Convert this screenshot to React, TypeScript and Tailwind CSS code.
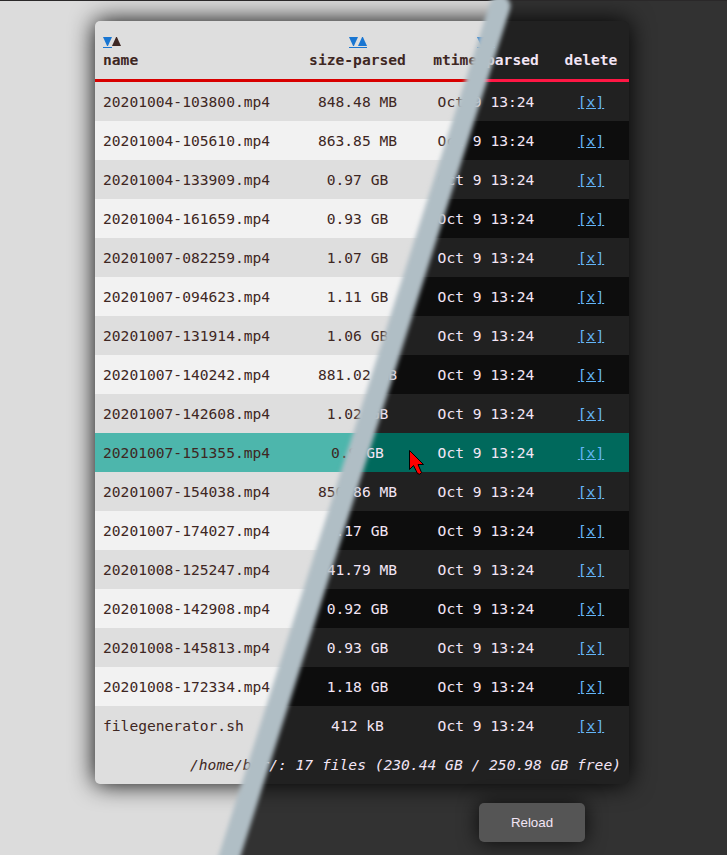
const FILES: [string, string][] = [
  ['20201004-103800.mp4', '848.48 MB'],
  ['20201004-105610.mp4', '863.85 MB'],
  ['20201004-133909.mp4', '0.97 GB'],
  ['20201004-161659.mp4', '0.93 GB'],
  ['20201007-082259.mp4', '1.07 GB'],
  ['20201007-094623.mp4', '1.11 GB'],
  ['20201007-131914.mp4', '1.06 GB'],
  ['20201007-140242.mp4', '881.02 MB'],
  ['20201007-142608.mp4', '1.02 GB'],
  ['20201007-151355.mp4', '0.9 GB'],
  ['20201007-154038.mp4', '850.86 MB'],
  ['20201007-174027.mp4', '1.17 GB'],
  ['20201008-125247.mp4', '841.79 MB'],
  ['20201008-142908.mp4', '0.92 GB'],
  ['20201008-145813.mp4', '0.93 GB'],
  ['20201008-172334.mp4', '1.18 GB'],
  ['filegenerator.sh', '412 kB'],
];

const HOVERED = 9;

const LIGHT = {
  page: 'bg-[#dcdcdc] text-[#3e2723]',
  card: 'bg-[#dedede] shadow-[0_0_25px_#000000]',
  header: 'border-[#d80000]',
  stripe: 'bg-[#f2f2f2]',
  hover: 'bg-[#4db6ac]',
  link: 'text-[#1976d2]',
  button: 'bg-[#eeeeee]',
};

const DARK = {
  page: 'bg-[#323232] text-[#f3e5f5]',
  card: 'bg-[#212121] shadow-[0_0_25px_#000000]',
  header: 'border-[#ff1744]',
  stripe: 'bg-[#0d0d0d]',
  hover: 'bg-[#00695c]',
  link: 'text-[#64b5f6]',
  button: 'bg-[#555555]',
};

type Theme = typeof LIGHT;

const COLUMNS = 'grid grid-cols-[201px_123px_134px_76px]';

function Triangle({ up, link }: { up?: boolean; link?: string }) {
  return (
    <span className={`flex h-[12px] w-[9px] flex-col ${link ?? ''}`}>
      <svg className="shrink-0" width="9" height="9" viewBox="0 0 9 9" fill="currentColor">
        <path d={up ? 'M0 9 L4.1 0 H4.9 L9 9Z' : 'M0 0 H9 L4.9 9 H4.1Z'} />
      </svg>
      {link && <span className="mt-px h-px shrink-0 bg-current" />}
    </span>
  );
}

function Heading({ label, theme, left, firstUp }: { label: string; theme: Theme; left?: boolean; firstUp?: boolean }) {
  return (
    <div className={`flex flex-col ${left ? 'items-start pl-2' : 'items-center'}`}>
      <div className="flex h-[29px] pt-4">
        {label !== 'delete' && (
          <>
            <Triangle link={theme.link} />
            <Triangle up link={firstUp ? undefined : theme.link} />
          </>
        )}
      </div>
      <div className="h-[20px] leading-[20px] font-bold">{label}</div>
    </div>
  );
}

function FileBrowser({ theme }: { theme: Theme }) {
  return (
    <div className={`h-[855px] w-[727px] overflow-hidden border-t border-[#2a2829] pt-5 pl-[95px] ${theme.page}`}>
      <div
        className={`w-[534px] overflow-hidden rounded-[5px] font-['DejaVu_Sans_Mono',monospace] text-[14.62px] whitespace-pre ${theme.card}`}
      >
        <div className={`${COLUMNS} h-[61px] border-b-3 ${theme.header}`}>
          <Heading label="name" theme={theme} left firstUp />
          <Heading label="size-parsed" theme={theme} />
          <Heading label="mtime-parsed" theme={theme} />
          <Heading label="delete" theme={theme} />
        </div>
        {FILES.map(([name, size], i) => (
          <div
            key={name}
            className={`${COLUMNS} h-[39px] text-center leading-[39px] ${
              i === HOVERED ? theme.hover : i % 2 ? theme.stripe : ''
            }`}
          >
            <span className="pl-2 text-left">{name}</span>
            <span>{size}</span>
            <span>Oct 9 13:24</span>
            <span>
              <a className={`underline underline-offset-1 ${theme.link}`}>[x]</a>
            </span>
          </div>
        ))}
        <div className="h-[39px] pr-2 text-right leading-[39px] italic">
          /home/bar/: 17 files (230.44 GB / 250.98 GB free)
        </div>
      </div>
      <button
        className={`mt-[19px] ml-[384px] block h-[39px] w-[106px] rounded-[5px] font-['Liberation_Sans',sans-serif] text-[13.33px] shadow-[0_0_20px_#000000cc] ${theme.button}`}
      >
        Reload
      </button>
    </div>
  );
}

export default function App() {
  return (
    <div className="relative h-[855px] w-[727px] overflow-hidden">
      <FileBrowser theme={LIGHT} />
      <div className="absolute inset-0 [clip-path:polygon(502px_0,727px_0,727px_855px,229px_855px)]">
        <FileBrowser theme={DARK} />
      </div>
      <svg className="absolute inset-0" width="727" height="855" viewBox="0 0 727 855">
        <defs>
          <filter id="soft" x="-20%" y="-20%" width="140%" height="140%">
            <feGaussianBlur stdDeviation="2" />
          </filter>
        </defs>
        <line x1="500" y1="6" x2="223.5" y2="875" stroke="#b0bec5" strokeWidth="21" strokeLinecap="round" filter="url(#soft)" />
        <path
          d="M409.5 450.5V469.5L413.5 465.5L417.5 473.5Q420 475.5 421.5 472.5L418 464.5H423.5Z"
          fill="#ff0000"
          stroke="#000000"
          strokeWidth="1"
        />
      </svg>
    </div>
  );
}
